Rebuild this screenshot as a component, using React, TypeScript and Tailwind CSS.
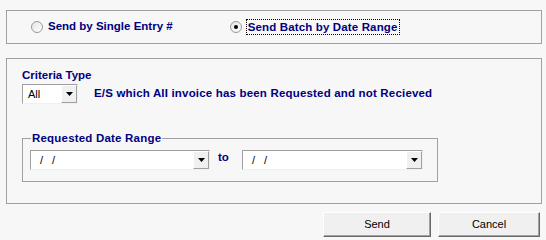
import React from "react";

function Arrow() {
  return (
    <svg width="7" height="4" viewBox="0 0 7 4" className="block">
      <path d="M0 0H7L3.5 4Z" fill="#000" />
    </svg>
  );
}

function Combo({ className, text, textClass }: { className: string; text: string; textClass: string }) {
  return (
    <div className={`flex h-[20px] border-t border-l border-t-[#a0a0a0] border-l-[#a0a0a0] border-b border-r border-b-[#f0f0f0] border-r-[#f0f0f0] bg-white ${className}`}>
      <div className={`flex-1 flex items-center text-[11px] text-black ${textClass}`}>{text}</div>
      <div className="w-[16px] h-[18px] mt-0 flex items-center justify-center bg-[#f0f0f0] border-r border-b border-r-[#a0a0a0] border-b-[#a0a0a0] border-l border-t border-l-white border-t-white">
        <Arrow />
      </div>
    </div>
  );
}

function Radio({ checked }: { checked?: boolean }) {
  return (
    <span className="relative w-[12px] h-[12px] rounded-full border border-[#9a9a9a] bg-gradient-to-br from-[#e4e4e4] to-white flex items-center justify-center">
      {checked && <span className="w-[4px] h-[4px] rounded-full bg-black" />}
    </span>
  );
}

export default function App() {
  return (
    <div className="w-[546px] h-[240px] bg-[#f7f7f7] pt-[10px] pl-[6px] pr-[4px] font-['Liberation_Sans',Arial,sans-serif] overflow-hidden">
      <div className="h-[34px] border border-[#a0a0a0] flex items-center pl-[24px]">
        <Radio />
        <span className="ml-[5px] text-[11.5px] font-bold text-[#000080]">Send by Single Entry #</span>
        <span className="ml-[57px]">
          <Radio checked />
        </span>
        <span className="ml-[4px] px-px border border-dotted border-black text-[11.5px] font-bold text-[#000080] leading-[14px] tracking-[0.15px]">
          Send Batch by Date Range
        </span>
      </div>

      <div className="mt-[14px] h-[146px] border border-[#a0a0a0] pl-[15px] pt-[9px]">
        <div className="text-[11.5px] font-bold text-[#000080] leading-[14px]">Criteria Type</div>
        <div className="mt-[2px] flex items-center">
          <Combo className="w-[56px]" text="All" textClass="pl-[5px]" />
          <span className="ml-[16px] text-[11.5px] font-bold text-[#000080] tracking-[0.18px]">
            E/S which AII invoice has been Requested and not Recieved
          </span>
        </div>

        <fieldset className="mt-[28px] w-[416px] border border-[#a0a0a0] px-[7px] pb-[11px] pt-[5px]">
          <legend className="ml-[1px] px-px text-[11.5px] font-bold text-[#000080] leading-[13px] tracking-[0.2px]">
            Requested Date Range
          </legend>
          <div className="flex items-center">
            <Combo className="w-[180px]" text="/ /" textClass="pl-[9px] tracking-[3px]" />
            <span className="ml-[8px] w-[24px] text-[11.5px] font-bold text-[#000080] -mt-[4px]">to</span>
            <Combo className="w-[181px]" text="/ /" textClass="pl-[9px] tracking-[3px]" />
          </div>
        </fieldset>
      </div>

      <div className="mt-[8px] flex justify-end pr-[2px] gap-[7px]">
        <button className="w-[108px] h-[25px] bg-[#f0f0f0] border border-t-white border-l-white border-r-[#696969] border-b-[#696969] shadow-[inset_-1px_-1px_0_#a0a0a0] text-[11px] text-black">
          Send
        </button>
        <button className="w-[102px] h-[25px] bg-[#f0f0f0] border border-t-white border-l-white border-r-[#696969] border-b-[#696969] shadow-[inset_-1px_-1px_0_#a0a0a0] text-[11px] text-black">
          Cancel
        </button>
      </div>
    </div>
  );
}
